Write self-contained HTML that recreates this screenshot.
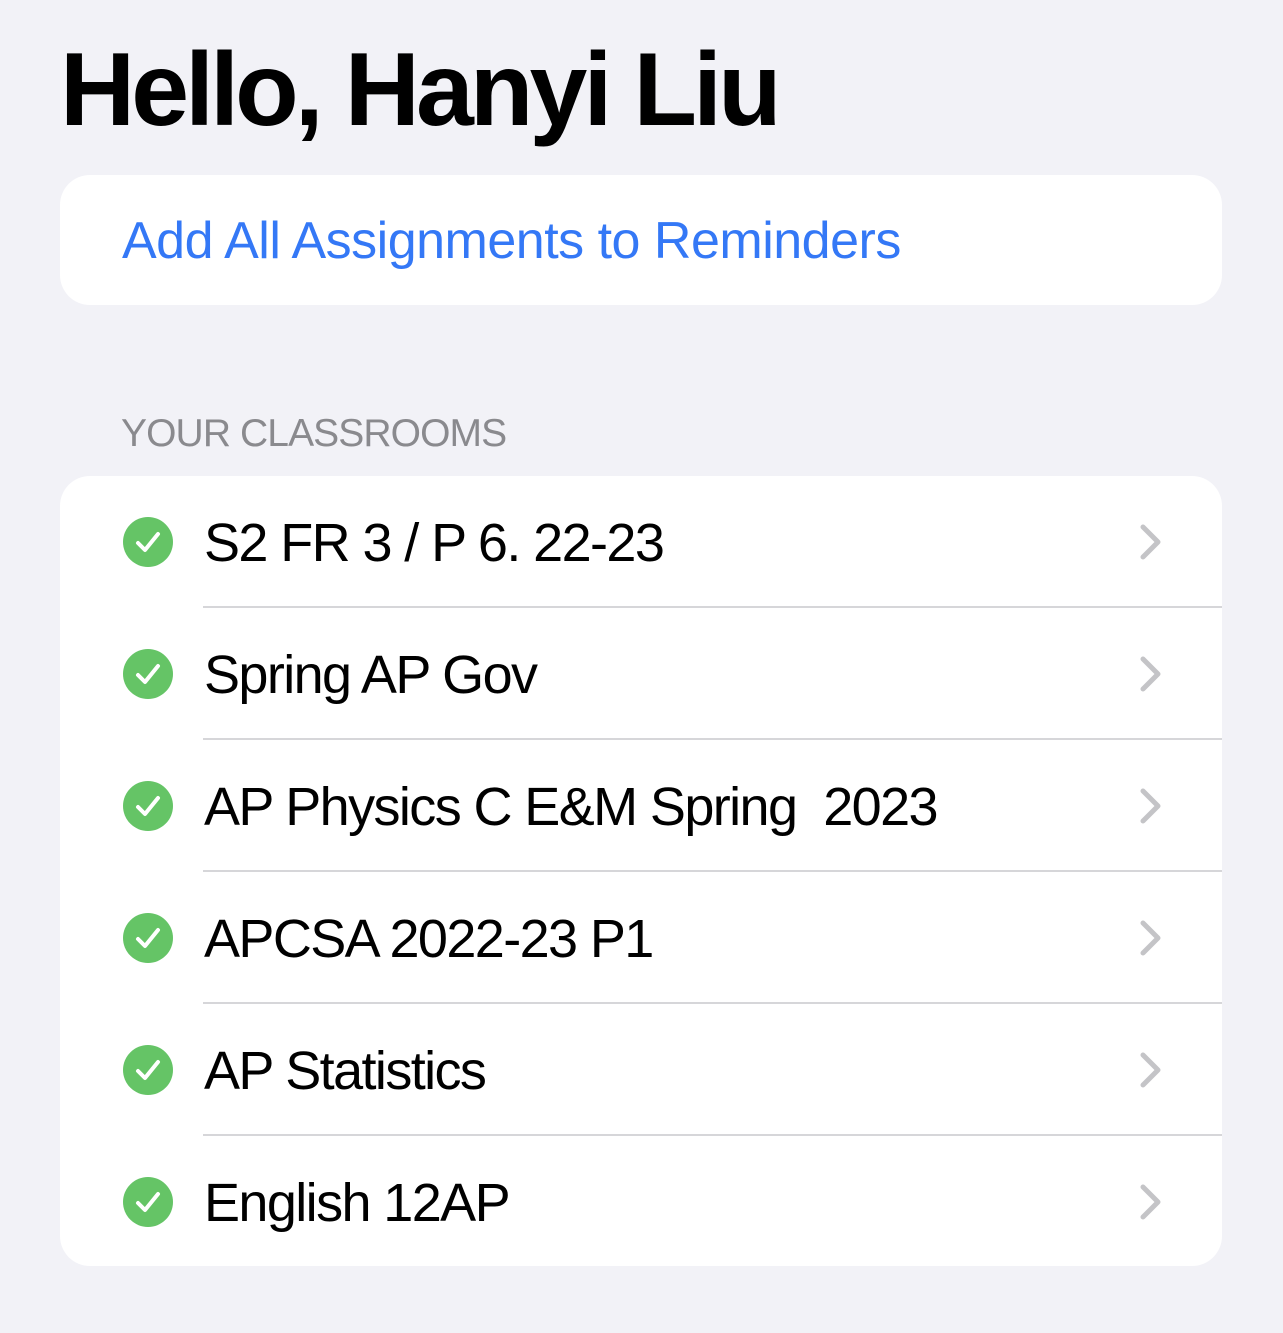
<!DOCTYPE html>
<html><head><style>
body{margin:0;width:1283px;height:1333px;background:#f2f2f7;font-family:"Liberation Sans",sans-serif;position:relative;overflow:hidden}
h1{position:absolute;left:60px;top:30px;margin:0;font-size:104px;font-weight:bold;letter-spacing:-3.9px;color:#000;line-height:120px}
.card{position:absolute;left:60px;width:1162px;background:#fff;border-radius:30px}
.btn{top:175px;height:130px}
.btn span{position:absolute;left:62px;top:36px;font-size:52px;color:#3478f6;line-height:60px;letter-spacing:-0.5px}
.hdr{position:absolute;left:121px;top:412px;font-size:39px;color:#8a8a8e;line-height:44px;letter-spacing:-0.9px}
.list{top:476px;height:790px}
.row{position:relative;height:132px}
.row .t{position:absolute;left:144px;top:36px;font-size:54px;line-height:62px;color:#000;letter-spacing:-1.6px}
.row .c{position:absolute;left:63px;top:41px}
.row .v{position:absolute;left:1078px;top:47px}
.row .s{position:absolute;left:143px;right:0;bottom:0;height:2px;background:#d6d6d9}
</style></head><body>
<h1>Hello, Hanyi Liu</h1>
<div class="card btn"><span>Add All Assignments to Reminders</span></div>
<div class="hdr">YOUR CLASSROOMS</div>
<div class="card list">
<div class="row"><svg class="c" width="50" height="50"><circle cx="25" cy="25" r="25" fill="#65c466"/><path d="M15 26 L22 33 L35 17" stroke="#fff" stroke-width="4" fill="none" stroke-linecap="round" stroke-linejoin="round"/></svg><div class="t">S2 FR 3 / P 6. 22-23</div><svg class="v" width="30" height="40"><path d="M5 4 L20 19 L5 34" stroke="#c4c4c7" stroke-width="5" fill="none" stroke-linecap="round" stroke-linejoin="round"/></svg><div class="s"></div></div>
<div class="row"><svg class="c" width="50" height="50"><circle cx="25" cy="25" r="25" fill="#65c466"/><path d="M15 26 L22 33 L35 17" stroke="#fff" stroke-width="4" fill="none" stroke-linecap="round" stroke-linejoin="round"/></svg><div class="t">Spring AP Gov</div><svg class="v" width="30" height="40"><path d="M5 4 L20 19 L5 34" stroke="#c4c4c7" stroke-width="5" fill="none" stroke-linecap="round" stroke-linejoin="round"/></svg><div class="s"></div></div>
<div class="row"><svg class="c" width="50" height="50"><circle cx="25" cy="25" r="25" fill="#65c466"/><path d="M15 26 L22 33 L35 17" stroke="#fff" stroke-width="4" fill="none" stroke-linecap="round" stroke-linejoin="round"/></svg><div class="t">AP Physics C E&amp;M Spring&nbsp; 2023</div><svg class="v" width="30" height="40"><path d="M5 4 L20 19 L5 34" stroke="#c4c4c7" stroke-width="5" fill="none" stroke-linecap="round" stroke-linejoin="round"/></svg><div class="s"></div></div>
<div class="row"><svg class="c" width="50" height="50"><circle cx="25" cy="25" r="25" fill="#65c466"/><path d="M15 26 L22 33 L35 17" stroke="#fff" stroke-width="4" fill="none" stroke-linecap="round" stroke-linejoin="round"/></svg><div class="t">APCSA 2022-23 P1</div><svg class="v" width="30" height="40"><path d="M5 4 L20 19 L5 34" stroke="#c4c4c7" stroke-width="5" fill="none" stroke-linecap="round" stroke-linejoin="round"/></svg><div class="s"></div></div>
<div class="row"><svg class="c" width="50" height="50"><circle cx="25" cy="25" r="25" fill="#65c466"/><path d="M15 26 L22 33 L35 17" stroke="#fff" stroke-width="4" fill="none" stroke-linecap="round" stroke-linejoin="round"/></svg><div class="t">AP Statistics</div><svg class="v" width="30" height="40"><path d="M5 4 L20 19 L5 34" stroke="#c4c4c7" stroke-width="5" fill="none" stroke-linecap="round" stroke-linejoin="round"/></svg><div class="s"></div></div>
<div class="row"><svg class="c" width="50" height="50"><circle cx="25" cy="25" r="25" fill="#65c466"/><path d="M15 26 L22 33 L35 17" stroke="#fff" stroke-width="4" fill="none" stroke-linecap="round" stroke-linejoin="round"/></svg><div class="t">English 12AP</div><svg class="v" width="30" height="40"><path d="M5 4 L20 19 L5 34" stroke="#c4c4c7" stroke-width="5" fill="none" stroke-linecap="round" stroke-linejoin="round"/></svg></div>
</div>
</body></html>
